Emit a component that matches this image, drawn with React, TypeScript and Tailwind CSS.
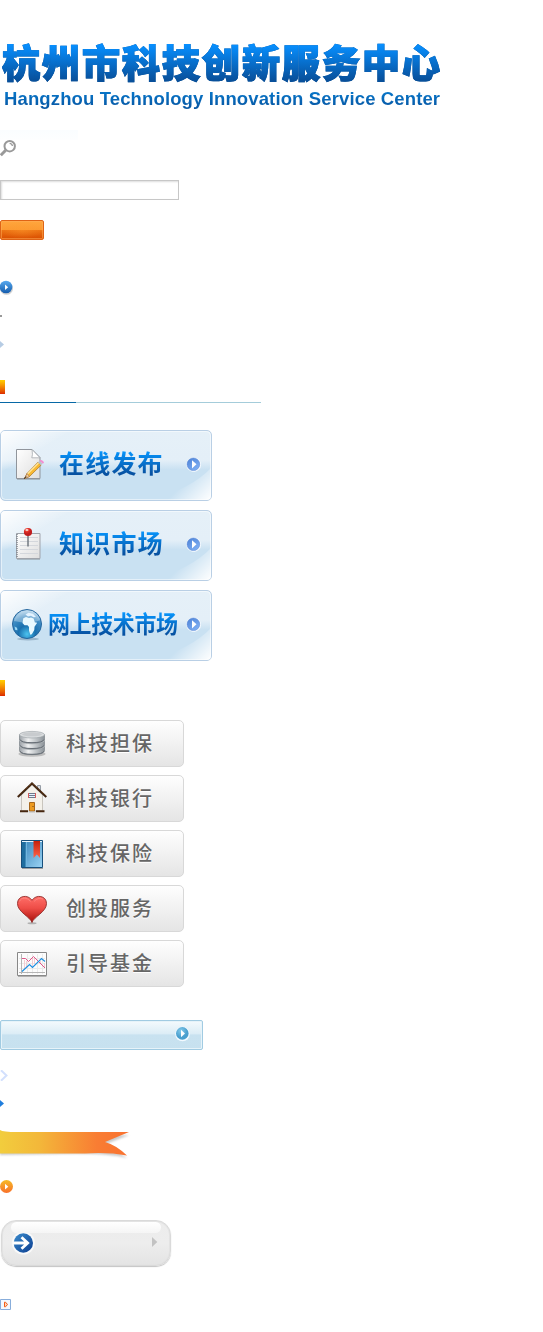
import React from "react";

const CJK = "font-['Noto_Sans_CJK_SC',sans-serif]";

function Magnifier() {
  return (
    <svg className="block" width="17" height="17" viewBox="0 0 17 17" fill="none">
      <path d="M5.7 10.3 0.8 15.3" stroke="#999" strokeWidth="3" />
      <circle cx="9.7" cy="6.2" r="5.2" stroke="#999" strokeWidth="2" fill="#fff" />
      <path d="M9.6 3.4Q12 3.6 12.4 6" stroke="#999" strokeWidth="1.3" />
    </svg>
  );
}

function Page() {
  return (
    <>
      <path d="M16.5 19.5H32L40 27.5V48.5H16.5Z" fill="url(#paper)" stroke="#90959c" />
      <path d="M17 49.5H40" stroke="#777" strokeOpacity=".4" />
      <path d="M32 19.5Q33 25 31.8 27.8L40 27.8Z" fill="#fff" stroke="#a5a9ae" strokeWidth=".8" />
    </>
  );
}

function PencilIcon() {
  return (
    <>
      <Page />
      <path d="M24.5 48.5 27 43.5 38 32.2 41 35.2 29.5 46.5Z" fill="#f8b832" stroke="#a77424" strokeWidth=".7" />
      <path d="M27.5 44 38.5 33" stroke="#ffe69a" strokeWidth="1.2" />
      <path d="M24.5 48.5 27 43.5 29.5 46.5Z" fill="#edcaa0" stroke="#a16c3b" strokeWidth=".6" />
      <path d="M24.3 48.7 26 46.5" stroke="#222" />
      <path d="M38 32.2 39.5 30.7 42.7 33.5 41 35.2Z" fill="#bcc4cc" />
      <path d="M39.5 30.7Q41 29 43 31T42.7 33.5Z" fill="#f48ed3" />
    </>
  );
}

function NoteIcon() {
  return (
    <>
      <path d="M16.5 23.5H40V48.5H16.5Z" fill="url(#paper)" stroke="#a0a4ab" />
      <path d="M17 49.5H40" stroke="#777" strokeOpacity=".4" />
      <path d="M20 27.5H38M20 31.5H38M20 35.5H38M20 39.5H38M20 43.5H38" stroke="#d4d7dc" />
      <path d="M17 24V48" stroke="#7f868f" strokeWidth="1.4" strokeDasharray="1 1" />
      <path d="M28 25V36.5" stroke="#727980" strokeWidth="1.5" />
      <circle cx="28" cy="22" r="4.1" fill="url(#pin)" />
      <ellipse cx="27" cy="20" rx="1.6" ry="1.1" fill="#fff" fillOpacity=".65" />
    </>
  );
}

function GlobeIcon() {
  return (
    <>
      <ellipse cx="28" cy="49" rx="11" ry="1.5" fill="#60809b" fillOpacity=".45" />
      <circle cx="27" cy="34" r="14.5" fill="url(#globe)" stroke="#25669e" />
      <path d="M14 31Q17 21 27 20.5T40 30Q31 35 14 31Z" fill="#fff" fillOpacity=".32" />
      <path d="M23.3 28.2 26 27 29 28 31 27.5 33.6 28.5 34.8 32.3 37.2 32.7 34.5 36.7 34.3 40 31.8 44.2 30.3 44.8 29 40.5 29 37 27.5 35.2 24.5 35.2 22.5 33Z" fill="#e9f9ff" />
      <path d="M25.5 24.5 28.5 22.8 33 23.7 36 27 33.5 27.2 31 25.7 28 26.5Z" fill="#e4f3ff" />
      <path d="M14.5 36.5 17 37.7 17.5 40.3 15.3 40Z" fill="#9dd8f5" />
    </>
  );
}

function Disk({ y }: { y: number }) {
  return (
    <>
      <path d={`M19.5 ${y}V${y + 4.5}Q20.5 ${y + 8.3} 32 ${y + 8.3}T44.5 ${y + 4.5}V${y}Z`} fill="url(#metal)" stroke="#858b91" strokeWidth=".8" />
      <path d={`M20 ${y + 4.8}Q21 ${y + 8} 32 ${y + 8}T44 ${y + 4.8}`} fill="none" stroke="#666d75" strokeWidth="1" />
      <ellipse cx="32" cy={y} rx="12.5" ry="3.3" fill="#dadddf" stroke="#979da3" strokeWidth=".6" />
    </>
  );
}

function DatabaseIcon() {
  return (
    <>
      <ellipse cx="32" cy="34" rx="13.5" ry="2.7" fill="#777" fillOpacity=".4" />
      <Disk y={26.3} />
      <Disk y={20.5} />
      <Disk y={14.7} />
      <ellipse cx="32" cy="14.3" rx="10" ry="2" fill="#c8cbce" />
    </>
  );
}

function HouseIcon() {
  return (
    <>
      <path d="M37.5 10.5H40.5V19H37.5Z" fill="#d9dde2" stroke="#969da6" />
      <path d="M21.5 20 32 9.5 42.5 20V36H21.5Z" fill="#f4f1ea" stroke="#c9c5bd" />
      <path d="M17.8 22 32 8.5 46.3 22" fill="none" stroke="#3b2211" strokeWidth="2.1" />
      <path d="M18.5 20.5 32 8.2 45.5 20.5" fill="none" stroke="#9b5a1d" strokeWidth=".7" strokeDasharray="1 1" />
      <path d="M28.5 18.5H35.5V22.5H28.5Z" fill="#e8f3ff" stroke="#6d7b8c" />
      <path d="M29 20.5H35" stroke="#6d7b8c" />
      <path d="M28.5 18V23M35.5 18V23" stroke="#d95d5d" />
      <path d="M29.5 27.5H34.5V36H29.5Z" fill="#ed9b20" stroke="#a7671c" />
      <path d="M33 31V32" stroke="#684113" />
      <path d="M20 36.2H28M36 36.2H44.5" stroke="#45260f" strokeWidth="2" />
      <path d="M29 37H35" stroke="#bbb" />
    </>
  );
}

function BookIcon() {
  return (
    <>
      <path d="M22 38.5H43" stroke="#555" strokeOpacity=".5" />
      <path d="M21.5 10.5H42.5V37.5H21.5Z" fill="url(#book)" stroke="#174f7c" />
      <path d="M22 11.5H42" stroke="#e6f5ff" />
      <path d="M22 12H25.5V37H22Z" fill="#1e6d9f" />
      <path d="M26.5 12V37" stroke="#70b6df" />
      <path d="M33.5 11H40V28L36.8 24.5 33.5 28Z" fill="url(#mark)" />
    </>
  );
}

function HeartIcon() {
  return (
    <>
      <ellipse cx="32" cy="38.3" rx="4.5" ry="1" fill="#777" fillOpacity=".5" />
      <path d="M32 37.5C30.5 32 17.5 27 17.5 18.5C17.5 10.5 28 9 32 15.3C36 9 46.5 10.5 46.5 18.5C46.5 27 33.5 32 32 37.5Z" fill="url(#heart)" stroke="#922b29" strokeWidth=".9" />
      <path d="M19.5 16.5C21 12 27 12 30.5 16.5M34 16.5Q38 12 43 14" fill="none" stroke="#ffaaa5" strokeOpacity=".4" />
    </>
  );
}

function ChartIcon() {
  return (
    <>
      <path d="M17.5 12.5H46.5V35.5H17.5Z" fill="#fcfcfc" stroke="#888" />
      <path d="M18 36.5H46.5" stroke="#777" strokeOpacity=".5" />
      <path d="M27.5 14V34M32.5 14V34M37.5 14V34M42.5 14V34M19 18.5H45M19 23.5H45M19 28.5H45" stroke="#ebebeb" />
      <path d="M24.5 20V29M26.5 21V27M32.5 18V26M34.5 18V24M40.5 21V23M44.5 23V27" stroke="#f4cdd2" />
      <path d="M21.5 14V34M19 32.5H45" stroke="#b5b5b5" />
      <path d="M22 18.5H25.5L28.5 21.5 33.5 16.5 45 28" fill="none" stroke="#e0568a" />
      <path d="M22 31.5 29.5 24.5 32.5 27.5 41.5 18.5 45 21.5" fill="none" stroke="#1e8fe0" strokeWidth="1.2" />
    </>
  );
}

function Card({ label, icon, wide = false }: { label: string; icon: React.ReactNode; wide?: boolean }) {
  return (
    <a className="relative block h-[71px] w-[212px] overflow-hidden rounded-[5px] border border-[#b9cfe5] bg-[linear-gradient(#e5f0f8_0%,#e4eff8_42%,#c9e1f2_56%,#c9e1f2_100%)]">
      <svg className="absolute -top-px -left-px" width="212" height="71" viewBox="0 0 212 71">
        <path d="M1 1H70L1 42Z" fill="url(#shine)" />
        <path d="M211 38Q192 58 152 70H211Z" fill="url(#corner)" />
        <rect x="1.5" y="1.5" width="209" height="68" rx="4" fill="none" stroke="#fff" strokeOpacity=".5" />
        {icon}
        <circle cx="193.7" cy="34.7" r="7.3" fill="#f7fbff" />
        <circle cx="193.4" cy="34.3" r="6.3" fill="url(#ball)" stroke="#5583d0" strokeWidth=".5" />
        <path d="M192 30.2 196.5 34.3 192 38.4Z" fill="#fff" />
      </svg>
      <span
        className={
          `${CJK} relative block w-fit origin-left bg-[linear-gradient(#0797ff_20%,#0750a0_82%)] bg-clip-text font-bold whitespace-nowrap text-transparent ` +
          (wide
            ? "mt-[14px] ml-[47px] scale-x-[0.915] text-[24px] leading-[36px] tracking-[-0.4px]"
            : "mt-[12px] ml-[58px] text-[25px] leading-[38px] tracking-[1.2px]")
        }
      >
        {label}
      </span>
    </a>
  );
}

function GreyButton({ label, icon }: { label: string; icon: React.ReactNode }) {
  return (
    <a className="flex h-[47px] w-[184px] items-start rounded-[5px] border border-[#d8d8d8] bg-linear-to-b from-[#fefefe] to-[#e5e5e5]">
      <svg className="-mt-px -ml-px shrink-0" width="66" height="47" viewBox="0 0 66 47">
        {icon}
      </svg>
      <span className={`${CJK} mt-[6px] text-[20px] leading-[32px] font-medium tracking-[2px] whitespace-nowrap text-[#666] [text-shadow:0_1px_0_#fff]`}>
        {label}
      </span>
    </a>
  );
}

function Gradients() {
  return (
    <svg className="absolute" width="0" height="0">
      <defs>
        <linearGradient id="paper" x2="1" y2="1"><stop stopColor="#fff" /><stop offset="1" stopColor="#dedede" /></linearGradient>
        <radialGradient id="pin" cx=".35" cy=".25"><stop stopColor="#ff9a85" /><stop offset=".45" stopColor="#e43126" /><stop offset="1" stopColor="#c01d1e" /></radialGradient>
        <radialGradient id="globe" cx=".5" cy=".85" r=".85"><stop stopColor="#4cc3ef" /><stop offset=".35" stopColor="#1a70ae" /><stop offset=".7" stopColor="#3e8cc4" /><stop offset="1" stopColor="#bad9ee" /></radialGradient>
        <linearGradient id="metal"><stop stopColor="#9aa0a6" /><stop offset=".35" stopColor="#f0f1f2" /><stop offset=".6" stopColor="#c9cdd0" /><stop offset="1" stopColor="#8a9197" /></linearGradient>
        <linearGradient id="book" x2="1" y2="1"><stop stopColor="#3480b8" /><stop offset="1" stopColor="#9bd4f4" /></linearGradient>
        <linearGradient id="mark" x2="0" y2="1"><stop stopColor="#c8200c" /><stop offset="1" stopColor="#ff654b" /></linearGradient>
        <linearGradient id="heart" x2="0" y2="1"><stop stopColor="#ff6f69" /><stop offset=".45" stopColor="#ee4d47" /><stop offset="1" stopColor="#a80c08" /></linearGradient>
        <linearGradient id="shine" gradientUnits="userSpaceOnUse" x1="0" y1="0" x2="20" y2="33"><stop stopColor="#fff" /><stop offset="1" stopColor="#fff" stopOpacity="0" /></linearGradient>
        <linearGradient id="corner" gradientUnits="userSpaceOnUse" x1="211" y1="70" x2="189" y2="48"><stop stopColor="#fff" /><stop offset="1" stopColor="#fff" stopOpacity="0" /></linearGradient>
        <linearGradient id="ball" x2=".8" y2="1"><stop stopColor="#4a80d6" /><stop offset="1" stopColor="#82b2f5" /></linearGradient>
        <linearGradient id="blue" x2="0" y2="1"><stop stopColor="#58aaf0" /><stop offset="1" stopColor="#145cad" /></linearGradient>
        <linearGradient id="orange" x2="0" y2="1"><stop stopColor="#f6bb26" /><stop offset="1" stopColor="#f8702a" /></linearGradient>
        <radialGradient id="cyan" cx=".4" cy=".3"><stop stopColor="#82caeb" /><stop offset="1" stopColor="#4a9fce" /></radialGradient>
        <linearGradient id="ribbon"><stop stopColor="#f2cd3d" /><stop offset=".3" stopColor="#f3b83a" /><stop offset=".75" stopColor="#f97d33" /><stop offset="1" stopColor="#f9712f" /></linearGradient>
        <linearGradient id="arrow" x2="1" y2="1"><stop stopColor="#3c8dcd" /><stop offset="1" stopColor="#0b3d90" /></linearGradient>
      </defs>
    </svg>
  );
}

export default function App() {
  return (
    <div className="flex h-[1332px] w-[543px] flex-col items-start overflow-hidden bg-white">
      <Gradients />
      <header className="h-[130px] pt-[38px]">
        <h1 className={`${CJK} ml-[2px] h-[48px] bg-[linear-gradient(#078fff_14%,#08509b_88%)] bg-clip-text text-[38px] leading-[45px] font-black tracking-[2px] whitespace-nowrap text-transparent [-webkit-text-stroke:1.2px_transparent] [filter:drop-shadow(0_0_0.5px_#064d91)]`}>
          杭州市科技创新服务中心
        </h1>
        <p className="ml-[4px] h-[26px] w-fit bg-[linear-gradient(#0878cb_20%,#0758a5_80%)] bg-clip-text font-['Liberation_Sans',sans-serif] text-[18.5px] leading-[26px] font-bold tracking-[0.13px] whitespace-nowrap text-transparent">
          Hangzhou Technology Innovation Service Center
        </p>
      </header>
      <div className="h-[10px] w-[78px] bg-linear-to-b from-[#fafdff] to-[#fdfeff]" />
      <Magnifier />

      <div className="mt-[23px] h-[20px] w-[179px] border border-[#c7c7c7] bg-white shadow-[inset_1px_1px_2px_#ddd]" />
      <div className="mt-[20px] h-[20px] w-[44px] rounded-[2px] border border-[#df6415] bg-[radial-gradient(ellipse_at_50%_50%,#ff9d3066,transparent_70%),linear-gradient(#ffa63d_0%,#fc9a32_49%,#ed7414_51%,#d94d00_100%)] shadow-[inset_0_0_0_1px_#ffac5788]" />

      <svg className="mt-[40px] block" width="14" height="16" viewBox="0 0 14 16">
        <circle cx="6.5" cy="8.3" r="6.5" fill="#777" fillOpacity=".35" />
        <circle cx="6" cy="7" r="6.3" fill="url(#blue)" />
        <path d="M5 4.5 8.2 7.3 5 10Z" fill="#fff" />
      </svg>
      <div className="mt-[19px] h-[2px] w-[2px] bg-[#999]" />
      <svg className="mt-[24px] block" width="5" height="7" viewBox="0 0 5 7"><path d="M0 0 4 3.5 0 7Z" fill="#b6cce4" /></svg>
      <div className="mt-[32px] h-[14px] w-[5px] bg-linear-to-b from-[#ffcf00] to-[#dc2600]" />
      <div className="mt-[8px] flex h-px w-[261px] bg-[#a4ccda]"><div className="w-[76px] bg-[#0768a6]" /></div>

      <nav className="mt-[27px] flex flex-col gap-[9px]">
        <Card label="在线发布" icon={<PencilIcon />} />
        <Card label="知识市场" icon={<NoteIcon />} />
        <Card label="网上技术市场" icon={<GlobeIcon />} wide />
      </nav>
      <div className="mt-[19px] h-[16px] w-[5px] bg-linear-to-b from-[#ffcf00] to-[#dc2600]" />

      <nav className="mt-[24px] flex flex-col gap-[8px]">
        <GreyButton label="科技担保" icon={<DatabaseIcon />} />
        <GreyButton label="科技银行" icon={<HouseIcon />} />
        <GreyButton label="科技保险" icon={<BookIcon />} />
        <GreyButton label="创投服务" icon={<HeartIcon />} />
        <GreyButton label="引导基金" icon={<ChartIcon />} />
      </nav>

      <div className="mt-[33px] flex h-[30px] w-[203px] justify-end rounded-[2px] border border-[#a1cbe2] bg-[linear-gradient(#f4fafd_0%,#dcedf6_45%,#c8e2f0_50%,#c7e1ef_100%)] pt-[5px] pr-[12px] shadow-[inset_0_0_0_1px_#e6f3f9]">
        <svg width="15" height="16" viewBox="0 0 15 16">
          <circle cx="7.5" cy="8" r="7.3" fill="#f3faff" />
          <circle cx="7.3" cy="7.4" r="6.3" fill="url(#cyan)" />
          <path d="M6 3.7 10 7.5 6 11.3Z" fill="#fff" />
        </svg>
      </div>

      <svg className="mt-[20px] block" width="8" height="11" viewBox="0 0 8 11"><path d="M1 .3 6.5 5.5 1 10.7" fill="none" stroke="#d3e0fd" strokeWidth="2" /></svg>
      <svg className="mt-[19px] block" width="5" height="7" viewBox="0 0 5 7"><path d="M0 0 4 3.5 0 7Z" fill="#207edd" /></svg>

      <svg className="mt-[23px] block" width="132" height="31" viewBox="0 0 132 31">
        <path d="M0 5H129L106 14 127 28Q107 23 62 24L0 25Z" fill="#777" fillOpacity=".4" className="blur-[1px]" />
        <path d="M0 0Q3 2 17 2H129L105 12Q116 15 127 25.5Q108 22 85 23.5H0Z" fill="url(#ribbon)" />
      </svg>

      <svg className="mt-[19px] block" width="14" height="14" viewBox="0 0 14 14">
        <circle cx="6.5" cy="6.5" r="6.5" fill="url(#orange)" />
        <path d="M5 3.8 8.3 6.7 5 9.5Z" fill="#fff" />
      </svg>

      <div className="mt-[26px] ml-[1px] h-[46px] w-[170px] rounded-[15px] border border-[#dadada] bg-linear-to-b from-[#ececec] via-[#ededed] to-[#e4e4e4] px-[9px] pt-px shadow-[inset_0_0_0_1px_#e3e3e3,0_1px_1px_#c4c4c4]">
        <div className="h-[11px] rounded-[6px] bg-linear-to-b from-white to-[#f5f5f5]" />
        <div className="flex items-start justify-between">
          <svg className="block" width="26" height="26" viewBox="0 0 26 26">
            <circle cx="12.3" cy="10" r="11.5" fill="#f9f9f9" />
            <circle cx="12.3" cy="10" r="9.7" fill="url(#arrow)" />
            <path d="M2 10H16.5M10.5 4.2 16.7 10 10.5 15.8" fill="none" stroke="#fff" strokeWidth="2.8" />
          </svg>
          <svg className="mt-[4px] mr-[3px]" width="6" height="11" viewBox="0 0 6 11"><path d="M0 0 5.3 5 0 10Z" fill="#c2c2c2" /></svg>
        </div>
      </div>

      <svg className="mt-[33px] block" width="12" height="12" viewBox="0 0 12 12">
        <path d="M.5 .5H10.5V10.5H.5Z" fill="#f4f9ff" stroke="#88addb" />
        <path d="M4.5 3.2H5.5L7.5 5.5 5.5 7.8H4.5Z" fill="#fbd5b9" stroke="#f35b13" />
      </svg>
    </div>
  );
}
